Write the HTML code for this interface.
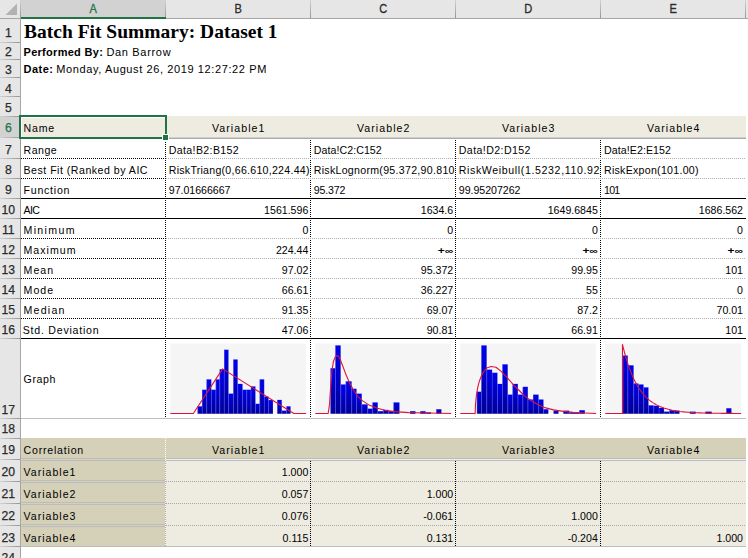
<!DOCTYPE html>
<html><head><meta charset="utf-8"><title>Batch Fit Summary</title>
<style>
html,body{margin:0;padding:0;background:#fff;}
body{width:748px;height:558px;overflow:hidden;font-family:"Liberation Sans",sans-serif;}
svg{display:block;font-family:"Liberation Sans",sans-serif;}
</style></head><body>
<svg width="748" height="558" viewBox="0 0 748 558">
<defs><linearGradient id="gv" x1="0" x2="0" y1="0" y2="1"><stop offset="0" stop-color="#d2d2d2"/><stop offset="1" stop-color="#969696"/></linearGradient><linearGradient id="gh" x1="0" x2="1" y1="0" y2="0"><stop offset="0" stop-color="#d2d2d2"/><stop offset="1" stop-color="#969696"/></linearGradient></defs>
<g shape-rendering="crispEdges">
<rect x="0" y="0" width="748" height="558" fill="#fff" />
<rect x="21" y="116" width="725" height="21" fill="#eeece1" />
<rect x="21" y="438" width="725" height="20" fill="#d5d0b8" />
<rect x="21" y="459" width="145" height="87" fill="#d5d0b8" />
<rect x="166" y="461" width="580" height="85" fill="#eeece1" />
<rect x="0" y="0" width="748" height="18" fill="#e6e6e6" />
<rect x="0" y="19" width="20" height="539" fill="#e6e6e6" />
<rect x="21" y="0" width="144" height="18" fill="#d2d2d2" />
<rect x="0" y="117" width="20" height="20" fill="#d2d2d2" />
<line x1="0" y1="18.5" x2="748" y2="18.5" stroke="#a6a6a6" stroke-width="1"/>
<line x1="20.5" y1="0" x2="20.5" y2="558" stroke="#a6a6a6" stroke-width="1"/>
<rect x="20" y="0" width="1" height="18" fill="url(#gv)" />
<rect x="165" y="0" width="1" height="18" fill="url(#gv)" />
<rect x="310" y="0" width="1" height="18" fill="url(#gv)" />
<rect x="455" y="0" width="1" height="18" fill="url(#gv)" />
<rect x="600" y="0" width="1" height="18" fill="url(#gv)" />
<rect x="745" y="0" width="1" height="18" fill="url(#gv)" />
<rect x="0" y="42" width="20" height="1" fill="url(#gh)" />
<rect x="0" y="59" width="20" height="1" fill="url(#gh)" />
<rect x="0" y="77" width="20" height="1" fill="url(#gh)" />
<rect x="0" y="96" width="20" height="1" fill="url(#gh)" />
<rect x="0" y="116" width="20" height="1" fill="url(#gh)" />
<rect x="0" y="137" width="20" height="1" fill="url(#gh)" />
<rect x="0" y="158" width="20" height="1" fill="url(#gh)" />
<rect x="0" y="178" width="20" height="1" fill="url(#gh)" />
<rect x="0" y="198" width="20" height="1" fill="url(#gh)" />
<rect x="0" y="218" width="20" height="1" fill="url(#gh)" />
<rect x="0" y="238" width="20" height="1" fill="url(#gh)" />
<rect x="0" y="258" width="20" height="1" fill="url(#gh)" />
<rect x="0" y="278" width="20" height="1" fill="url(#gh)" />
<rect x="0" y="298" width="20" height="1" fill="url(#gh)" />
<rect x="0" y="318" width="20" height="1" fill="url(#gh)" />
<rect x="0" y="338" width="20" height="1" fill="url(#gh)" />
<rect x="0" y="418" width="20" height="1" fill="url(#gh)" />
<rect x="0" y="438" width="20" height="1" fill="url(#gh)" />
<rect x="0" y="459" width="20" height="1" fill="url(#gh)" />
<rect x="0" y="481" width="20" height="1" fill="url(#gh)" />
<rect x="0" y="503" width="20" height="1" fill="url(#gh)" />
<rect x="0" y="525" width="20" height="1" fill="url(#gh)" />
<rect x="0" y="546" width="20" height="1" fill="url(#gh)" />
<polygon points="5.5,15 17,3.5 17,15" fill="#b2b2b2" shape-rendering="geometricPrecision"/>
<line x1="21" y1="18.0" x2="166" y2="18.0" stroke="#217346" stroke-width="2"/>
<line x1="20.0" y1="116" x2="20.0" y2="138" stroke="#217346" stroke-width="2"/>
<line x1="20.5" y1="139" x2="20.5" y2="339" stroke="#9a9a9a" stroke-width="1"/>
<line x1="166" y1="137.5" x2="746" y2="137.5" stroke="#d0d0d0" stroke-width="1"/>
<line x1="166" y1="138.5" x2="746" y2="138.5" stroke="#aaaaaa" stroke-width="1"/>
<line x1="165.5" y1="140" x2="165.5" y2="418" stroke="#000" stroke-width="1" stroke-dasharray="1 1"/>
<line x1="310.5" y1="140" x2="310.5" y2="418" stroke="#000" stroke-width="1" stroke-dasharray="1 1"/>
<line x1="455.5" y1="140" x2="455.5" y2="418" stroke="#000" stroke-width="1" stroke-dasharray="1 1"/>
<line x1="600.5" y1="140" x2="600.5" y2="418" stroke="#000" stroke-width="1" stroke-dasharray="1 1"/>
<line x1="21" y1="158.5" x2="165" y2="158.5" stroke="#000" stroke-width="1" stroke-dasharray="1 1"/>
<line x1="166" y1="158.5" x2="746" y2="158.5" stroke="#b0b0b0" stroke-width="1" stroke-dasharray="1 1"/>
<line x1="21" y1="178.5" x2="165" y2="178.5" stroke="#000" stroke-width="1" stroke-dasharray="1 1"/>
<line x1="166" y1="178.5" x2="746" y2="178.5" stroke="#b0b0b0" stroke-width="1" stroke-dasharray="1 1"/>
<line x1="21" y1="198.5" x2="746" y2="198.5" stroke="#000" stroke-width="1"/>
<line x1="21" y1="218.5" x2="746" y2="218.5" stroke="#000" stroke-width="1"/>
<line x1="21" y1="238.5" x2="165" y2="238.5" stroke="#000" stroke-width="1" stroke-dasharray="1 1"/>
<line x1="166" y1="238.5" x2="746" y2="238.5" stroke="#b0b0b0" stroke-width="1" stroke-dasharray="1 1"/>
<line x1="21" y1="258.5" x2="165" y2="258.5" stroke="#000" stroke-width="1" stroke-dasharray="1 1"/>
<line x1="166" y1="258.5" x2="746" y2="258.5" stroke="#b0b0b0" stroke-width="1" stroke-dasharray="1 1"/>
<line x1="21" y1="278.5" x2="165" y2="278.5" stroke="#000" stroke-width="1" stroke-dasharray="1 1"/>
<line x1="166" y1="278.5" x2="746" y2="278.5" stroke="#b0b0b0" stroke-width="1" stroke-dasharray="1 1"/>
<line x1="21" y1="298.5" x2="165" y2="298.5" stroke="#000" stroke-width="1" stroke-dasharray="1 1"/>
<line x1="166" y1="298.5" x2="746" y2="298.5" stroke="#b0b0b0" stroke-width="1" stroke-dasharray="1 1"/>
<line x1="21" y1="318.5" x2="165" y2="318.5" stroke="#000" stroke-width="1" stroke-dasharray="1 1"/>
<line x1="166" y1="318.5" x2="746" y2="318.5" stroke="#b0b0b0" stroke-width="1" stroke-dasharray="1 1"/>
<line x1="21" y1="338.5" x2="746" y2="338.5" stroke="#000" stroke-width="1"/>
<line x1="21" y1="418.5" x2="746" y2="418.5" stroke="#bdbdbd" stroke-width="1"/>
<line x1="21" y1="458.5" x2="746" y2="458.5" stroke="#bcbcbc" stroke-width="1"/>
<line x1="166" y1="459.5" x2="746" y2="459.5" stroke="#f0efe8" stroke-width="1"/>
<line x1="21" y1="460.5" x2="746" y2="460.5" stroke="#bcbcbc" stroke-width="1"/>
<line x1="21" y1="480.5" x2="165" y2="480.5" stroke="#bcbcbc" stroke-width="1"/>
<line x1="21" y1="482.5" x2="165" y2="482.5" stroke="#bcbcbc" stroke-width="1"/>
<line x1="166" y1="481.5" x2="746" y2="481.5" stroke="#a8a8a8" stroke-width="1" stroke-dasharray="1 1"/>
<line x1="21" y1="502.5" x2="165" y2="502.5" stroke="#bcbcbc" stroke-width="1"/>
<line x1="21" y1="504.5" x2="165" y2="504.5" stroke="#bcbcbc" stroke-width="1"/>
<line x1="166" y1="503.5" x2="746" y2="503.5" stroke="#a8a8a8" stroke-width="1" stroke-dasharray="1 1"/>
<line x1="21" y1="524.5" x2="165" y2="524.5" stroke="#bcbcbc" stroke-width="1"/>
<line x1="21" y1="526.5" x2="165" y2="526.5" stroke="#bcbcbc" stroke-width="1"/>
<line x1="166" y1="525.5" x2="746" y2="525.5" stroke="#a8a8a8" stroke-width="1" stroke-dasharray="1 1"/>
<line x1="21" y1="546.5" x2="746" y2="546.5" stroke="#bcbcbc" stroke-width="1"/>
<line x1="165.5" y1="461" x2="165.5" y2="546" stroke="#a8a8a8" stroke-width="1"/>
<line x1="165.5" y1="438" x2="165.5" y2="546" stroke="#ffffff" stroke-width="1" stroke-dasharray="1 1"/>
<line x1="310.5" y1="461" x2="310.5" y2="546" stroke="#000" stroke-width="1" stroke-dasharray="1 1"/>
<line x1="455.5" y1="461" x2="455.5" y2="546" stroke="#000" stroke-width="1" stroke-dasharray="1 1"/>
<line x1="600.5" y1="461" x2="600.5" y2="546" stroke="#000" stroke-width="1" stroke-dasharray="1 1"/>
<rect x="20" y="116" width="146" height="22" fill="none" stroke="#217346" stroke-width="2"/>
<line x1="21" y1="117.5" x2="165" y2="117.5" stroke="#fff" stroke-width="1"/>
<line x1="21.5" y1="117" x2="21.5" y2="137" stroke="#fff" stroke-width="1"/>
<rect x="162" y="134" width="7" height="7" fill="#fff" />
<rect x="163" y="135" width="5" height="5" fill="#217346" />
</g>
<text x="0" y="0" font-size="12.3" fill="#217346" text-anchor="middle" stroke="#217346" stroke-width="0.3" transform="translate(93.2,12.8) scale(0.9,1)">A</text>
<text x="0" y="0" font-size="12.3" fill="#2b2b2b" text-anchor="middle" stroke="#2b2b2b" stroke-width="0.3" transform="translate(238.2,12.8) scale(0.9,1)">B</text>
<text x="0" y="0" font-size="12.3" fill="#2b2b2b" text-anchor="middle" stroke="#2b2b2b" stroke-width="0.3" transform="translate(383.2,12.8) scale(0.9,1)">C</text>
<text x="0" y="0" font-size="12.3" fill="#2b2b2b" text-anchor="middle" stroke="#2b2b2b" stroke-width="0.3" transform="translate(528.2,12.8) scale(0.9,1)">D</text>
<text x="0" y="0" font-size="12.3" fill="#2b2b2b" text-anchor="middle" stroke="#2b2b2b" stroke-width="0.3" transform="translate(673.2,12.8) scale(0.9,1)">E</text>
<text x="8.3" y="37.2" font-size="12.2" fill="#2b2b2b" text-anchor="middle" stroke="#2b2b2b" stroke-width="0.25">1</text>
<text x="8.3" y="55.5" font-size="12.2" fill="#2b2b2b" text-anchor="middle" stroke="#2b2b2b" stroke-width="0.25">2</text>
<text x="8.3" y="73.5" font-size="12.2" fill="#2b2b2b" text-anchor="middle" stroke="#2b2b2b" stroke-width="0.25">3</text>
<text x="8.3" y="92.5" font-size="12.2" fill="#2b2b2b" text-anchor="middle" stroke="#2b2b2b" stroke-width="0.25">4</text>
<text x="8.3" y="112.3" font-size="12.2" fill="#2b2b2b" text-anchor="middle" stroke="#2b2b2b" stroke-width="0.25">5</text>
<text x="8.3" y="132" font-size="12.2" fill="#217346" text-anchor="middle" stroke="#217346" stroke-width="0.25">6</text>
<text x="8.3" y="153.5" font-size="12.2" fill="#2b2b2b" text-anchor="middle" stroke="#2b2b2b" stroke-width="0.25">7</text>
<text x="8.3" y="173.5" font-size="12.2" fill="#2b2b2b" text-anchor="middle" stroke="#2b2b2b" stroke-width="0.25">8</text>
<text x="8.3" y="193.5" font-size="12.2" fill="#2b2b2b" text-anchor="middle" stroke="#2b2b2b" stroke-width="0.25">9</text>
<text x="8.3" y="213.5" font-size="12.2" fill="#2b2b2b" text-anchor="middle" stroke="#2b2b2b" stroke-width="0.25">10</text>
<text x="8.3" y="233.5" font-size="12.2" fill="#2b2b2b" text-anchor="middle" stroke="#2b2b2b" stroke-width="0.25">11</text>
<text x="8.3" y="253.5" font-size="12.2" fill="#2b2b2b" text-anchor="middle" stroke="#2b2b2b" stroke-width="0.25">12</text>
<text x="8.3" y="273.5" font-size="12.2" fill="#2b2b2b" text-anchor="middle" stroke="#2b2b2b" stroke-width="0.25">13</text>
<text x="8.3" y="293.5" font-size="12.2" fill="#2b2b2b" text-anchor="middle" stroke="#2b2b2b" stroke-width="0.25">14</text>
<text x="8.3" y="313.5" font-size="12.2" fill="#2b2b2b" text-anchor="middle" stroke="#2b2b2b" stroke-width="0.25">15</text>
<text x="8.3" y="333.5" font-size="12.2" fill="#2b2b2b" text-anchor="middle" stroke="#2b2b2b" stroke-width="0.25">16</text>
<text x="8.3" y="413.5" font-size="12.2" fill="#2b2b2b" text-anchor="middle" stroke="#2b2b2b" stroke-width="0.25">17</text>
<text x="8.3" y="433" font-size="12.2" fill="#2b2b2b" text-anchor="middle" stroke="#2b2b2b" stroke-width="0.25">18</text>
<text x="8.3" y="454" font-size="12.2" fill="#2b2b2b" text-anchor="middle" stroke="#2b2b2b" stroke-width="0.25">19</text>
<text x="8.3" y="476" font-size="12.2" fill="#2b2b2b" text-anchor="middle" stroke="#2b2b2b" stroke-width="0.25">20</text>
<text x="8.3" y="498" font-size="12.2" fill="#2b2b2b" text-anchor="middle" stroke="#2b2b2b" stroke-width="0.25">21</text>
<text x="8.3" y="520" font-size="12.2" fill="#2b2b2b" text-anchor="middle" stroke="#2b2b2b" stroke-width="0.25">22</text>
<text x="8.3" y="542" font-size="12.2" fill="#2b2b2b" text-anchor="middle" stroke="#2b2b2b" stroke-width="0.25">23</text>
<text x="8.3" y="562" font-size="12.2" fill="#2b2b2b" text-anchor="middle" stroke="#2b2b2b" stroke-width="0.25">24</text>
<text x="24" y="37.6" font-size="19.5" font-family="Liberation Serif, serif" font-weight="bold" fill="#000" textLength="253.5" lengthAdjust="spacing" >Batch Fit Summary: Dataset 1</text>
<text x="23.5" y="56" font-size="11" font-weight="bold" fill="#000" textLength="79.3" lengthAdjust="spacing" >Performed By:</text>
<text x="106.4" y="56" font-size="11" fill="#000" textLength="64.2" lengthAdjust="spacing" >Dan Barrow</text>
<text x="23.5" y="73" font-size="11" font-weight="bold" fill="#000" textLength="29.5" lengthAdjust="spacing" >Date:</text>
<text x="56.3" y="73" font-size="11" fill="#000" textLength="210" lengthAdjust="spacing" >Monday, August 26, 2019 12:27:22 PM</text>
<text x="23.5" y="132" font-size="10.6" fill="#000" textLength="30.75" lengthAdjust="spacing" >Name</text>
<text x="23.5" y="154" font-size="10.6" fill="#000" textLength="33.25" lengthAdjust="spacing" >Range</text>
<text x="23.5" y="174" font-size="10.6" fill="#000" textLength="124" lengthAdjust="spacing" >Best Fit (Ranked by AIC</text>
<text x="23.5" y="194" font-size="10.6" fill="#000" textLength="46" lengthAdjust="spacing" >Function</text>
<text x="23.5" y="214" font-size="10.6" fill="#000" textLength="16.5" lengthAdjust="spacing" >AIC</text>
<text x="23.5" y="234" font-size="10.6" fill="#000" textLength="51" lengthAdjust="spacing" >Minimum</text>
<text x="23.5" y="254" font-size="10.6" fill="#000" textLength="52" lengthAdjust="spacing" >Maximum</text>
<text x="23.5" y="274" font-size="10.6" fill="#000" textLength="29.75" lengthAdjust="spacing" >Mean</text>
<text x="23.5" y="294" font-size="10.6" fill="#000" textLength="29.75" lengthAdjust="spacing" >Mode</text>
<text x="23.5" y="314" font-size="10.6" fill="#000" textLength="41" lengthAdjust="spacing" >Median</text>
<text x="22.8" y="334" font-size="10.6" fill="#000" textLength="75.75" lengthAdjust="spacing" >Std. Deviation</text>
<text x="23.5" y="382.5" font-size="10.6" fill="#000" textLength="32" lengthAdjust="spacing" >Graph</text>
<text x="238.2" y="132" font-size="10.6" fill="#000" text-anchor="middle" textLength="52.5" lengthAdjust="spacing" >Variable1</text>
<text x="238.2" y="454" font-size="10.6" fill="#000" text-anchor="middle" textLength="52.5" lengthAdjust="spacing" >Variable1</text>
<text x="383.2" y="132" font-size="10.6" fill="#000" text-anchor="middle" textLength="52.5" lengthAdjust="spacing" >Variable2</text>
<text x="383.2" y="454" font-size="10.6" fill="#000" text-anchor="middle" textLength="52.5" lengthAdjust="spacing" >Variable2</text>
<text x="528.2" y="132" font-size="10.6" fill="#000" text-anchor="middle" textLength="52.5" lengthAdjust="spacing" >Variable3</text>
<text x="528.2" y="454" font-size="10.6" fill="#000" text-anchor="middle" textLength="52.5" lengthAdjust="spacing" >Variable3</text>
<text x="673.2" y="132" font-size="10.6" fill="#000" text-anchor="middle" textLength="52.5" lengthAdjust="spacing" >Variable4</text>
<text x="673.2" y="454" font-size="10.6" fill="#000" text-anchor="middle" textLength="52.5" lengthAdjust="spacing" >Variable4</text>
<text x="168.75" y="154" font-size="10.6" fill="#000" textLength="70" lengthAdjust="spacing" >Data!B2:B152</text>
<text x="168.75" y="174" font-size="10.6" fill="#000" textLength="140.75" lengthAdjust="spacing" >RiskTriang(0,66.610,224.44)</text>
<text x="168.75" y="194" font-size="10.6" fill="#000" textLength="61.75" lengthAdjust="spacing" >97.01666667</text>
<text x="313.75" y="154" font-size="10.6" fill="#000" textLength="68" lengthAdjust="spacing" >Data!C2:C152</text>
<text x="313.75" y="174" font-size="10.6" fill="#000" textLength="140.75" lengthAdjust="spacing" >RiskLognorm(95.372,90.810</text>
<text x="313.75" y="194" font-size="10.6" fill="#000" textLength="31.75" lengthAdjust="spacing" >95.372</text>
<text x="458.75" y="154" font-size="10.6" fill="#000" textLength="71.75" lengthAdjust="spacing" >Data!D2:D152</text>
<text x="458.75" y="174" font-size="10.6" fill="#000" textLength="140.75" lengthAdjust="spacing" >RiskWeibull(1.5232,110.92</text>
<text x="458.75" y="194" font-size="10.6" fill="#000" textLength="61.75" lengthAdjust="spacing" >99.95207262</text>
<text x="604" y="154" font-size="10.6" fill="#000" textLength="67" lengthAdjust="spacing" >Data!E2:E152</text>
<text x="604" y="174" font-size="10.6" fill="#000" textLength="94.5" lengthAdjust="spacing" >RiskExpon(101.00)</text>
<text x="604" y="194" font-size="10.6" fill="#000" textLength="16.25" lengthAdjust="spacing" >101</text>
<text x="308.3" y="214" font-size="10.6" fill="#000" text-anchor="end" >1561.596</text>
<text x="453.2" y="214" font-size="10.6" fill="#000" text-anchor="end" >1634.6</text>
<text x="597.8" y="214" font-size="10.6" fill="#000" text-anchor="end" >1649.6845</text>
<text x="743" y="214" font-size="10.6" fill="#000" text-anchor="end" >1686.562</text>
<text x="308.3" y="234" font-size="10.6" fill="#000" text-anchor="end" >0</text>
<text x="453.2" y="234" font-size="10.6" fill="#000" text-anchor="end" >0</text>
<text x="597.8" y="234" font-size="10.6" fill="#000" text-anchor="end" >0</text>
<text x="743" y="234" font-size="10.6" fill="#000" text-anchor="end" >0</text>
<text x="308.3" y="254" font-size="10.6" fill="#000" text-anchor="end" >224.44</text>
<text x="453.2" y="253.5" font-size="8.6" font-weight="bold" fill="#000" text-anchor="end" textLength="15.4" lengthAdjust="spacingAndGlyphs" >+∞</text>
<text x="597.8" y="253.5" font-size="8.6" font-weight="bold" fill="#000" text-anchor="end" textLength="15.4" lengthAdjust="spacingAndGlyphs" >+∞</text>
<text x="743" y="253.5" font-size="8.6" font-weight="bold" fill="#000" text-anchor="end" textLength="15.4" lengthAdjust="spacingAndGlyphs" >+∞</text>
<text x="308.3" y="274" font-size="10.6" fill="#000" text-anchor="end" >97.02</text>
<text x="453.2" y="274" font-size="10.6" fill="#000" text-anchor="end" >95.372</text>
<text x="597.8" y="274" font-size="10.6" fill="#000" text-anchor="end" >99.95</text>
<text x="743" y="274" font-size="10.6" fill="#000" text-anchor="end" >101</text>
<text x="308.3" y="294" font-size="10.6" fill="#000" text-anchor="end" >66.61</text>
<text x="453.2" y="294" font-size="10.6" fill="#000" text-anchor="end" >36.227</text>
<text x="597.8" y="294" font-size="10.6" fill="#000" text-anchor="end" >55</text>
<text x="743" y="294" font-size="10.6" fill="#000" text-anchor="end" >0</text>
<text x="308.3" y="314" font-size="10.6" fill="#000" text-anchor="end" >91.35</text>
<text x="453.2" y="314" font-size="10.6" fill="#000" text-anchor="end" >69.07</text>
<text x="597.8" y="314" font-size="10.6" fill="#000" text-anchor="end" >87.2</text>
<text x="743" y="314" font-size="10.6" fill="#000" text-anchor="end" >70.01</text>
<text x="308.3" y="334" font-size="10.6" fill="#000" text-anchor="end" >47.06</text>
<text x="453.2" y="334" font-size="10.6" fill="#000" text-anchor="end" >90.81</text>
<text x="597.8" y="334" font-size="10.6" fill="#000" text-anchor="end" >66.91</text>
<text x="743" y="334" font-size="10.6" fill="#000" text-anchor="end" >101</text>
<text x="23.5" y="454" font-size="10.6" fill="#000" textLength="59.75" lengthAdjust="spacing" >Correlation</text>
<text x="23.5" y="476" font-size="10.6" fill="#000" textLength="52" lengthAdjust="spacing" >Variable1</text>
<text x="23.5" y="498" font-size="10.6" fill="#000" textLength="52" lengthAdjust="spacing" >Variable2</text>
<text x="23.5" y="520" font-size="10.6" fill="#000" textLength="52" lengthAdjust="spacing" >Variable3</text>
<text x="23.5" y="542" font-size="10.6" fill="#000" textLength="52" lengthAdjust="spacing" >Variable4</text>
<text x="308.3" y="476" font-size="10.6" fill="#000" text-anchor="end" >1.000</text>
<text x="308.3" y="498" font-size="10.6" fill="#000" text-anchor="end" >0.057</text>
<text x="453.2" y="498" font-size="10.6" fill="#000" text-anchor="end" >1.000</text>
<text x="308.3" y="520" font-size="10.6" fill="#000" text-anchor="end" >0.076</text>
<text x="453.2" y="520" font-size="10.6" fill="#000" text-anchor="end" >-0.061</text>
<text x="597.8" y="520" font-size="10.6" fill="#000" text-anchor="end" >1.000</text>
<text x="308.3" y="542" font-size="10.6" fill="#000" text-anchor="end" >0.115</text>
<text x="453.2" y="542" font-size="10.6" fill="#000" text-anchor="end" >0.131</text>
<text x="597.8" y="542" font-size="10.6" fill="#000" text-anchor="end" >-0.204</text>
<text x="743" y="542" font-size="10.6" fill="#000" text-anchor="end" >1.000</text>
<svg x="166" y="338" width="146" height="82" viewBox="0 0 748 420" preserveAspectRatio="none" overflow="hidden">
<defs><linearGradient id="vg" x1="0" x2="0" y1="0" y2="1"><stop offset="0" stop-color="#0000ea"/><stop offset="1" stop-color="#000098"/></linearGradient></defs>
<rect x="22" y="28" width="696" height="356.5" fill="#f5f5f5"/>
<rect x="162" y="350" width="23" height="38" fill="url(#vg)"/>
<rect x="162" y="350" width="3" height="38" fill="#6a6aff" opacity="0.55"/>
<rect x="183" y="350" width="2" height="38" fill="#6a6aff" opacity="0.35"/>
<rect x="185" y="265" width="23" height="123" fill="url(#vg)"/>
<rect x="185" y="265" width="3" height="123" fill="#6a6aff" opacity="0.55"/>
<rect x="206" y="265" width="2" height="123" fill="#6a6aff" opacity="0.35"/>
<rect x="208" y="212" width="24" height="176" fill="url(#vg)"/>
<rect x="208" y="212" width="3" height="176" fill="#6a6aff" opacity="0.55"/>
<rect x="230" y="212" width="2" height="176" fill="#6a6aff" opacity="0.35"/>
<rect x="232" y="265" width="23" height="123" fill="url(#vg)"/>
<rect x="232" y="265" width="3" height="123" fill="#6a6aff" opacity="0.55"/>
<rect x="253" y="265" width="2" height="123" fill="#6a6aff" opacity="0.35"/>
<rect x="255" y="212" width="20" height="176" fill="url(#vg)"/>
<rect x="255" y="212" width="3" height="176" fill="#6a6aff" opacity="0.55"/>
<rect x="273" y="212" width="2" height="176" fill="#6a6aff" opacity="0.35"/>
<rect x="275" y="160" width="23" height="228" fill="url(#vg)"/>
<rect x="275" y="160" width="3" height="228" fill="#6a6aff" opacity="0.55"/>
<rect x="296" y="160" width="2" height="228" fill="#6a6aff" opacity="0.35"/>
<rect x="298" y="60" width="22" height="328" fill="url(#vg)"/>
<rect x="298" y="60" width="3" height="328" fill="#6a6aff" opacity="0.55"/>
<rect x="318" y="60" width="2" height="328" fill="#6a6aff" opacity="0.35"/>
<rect x="320" y="285" width="25" height="103" fill="url(#vg)"/>
<rect x="320" y="285" width="3" height="103" fill="#6a6aff" opacity="0.55"/>
<rect x="343" y="285" width="2" height="103" fill="#6a6aff" opacity="0.35"/>
<rect x="345" y="110" width="22" height="278" fill="url(#vg)"/>
<rect x="345" y="110" width="3" height="278" fill="#6a6aff" opacity="0.55"/>
<rect x="365" y="110" width="2" height="278" fill="#6a6aff" opacity="0.35"/>
<rect x="367" y="235" width="25" height="153" fill="url(#vg)"/>
<rect x="367" y="235" width="3" height="153" fill="#6a6aff" opacity="0.55"/>
<rect x="390" y="235" width="2" height="153" fill="#6a6aff" opacity="0.35"/>
<rect x="392" y="265" width="21" height="123" fill="url(#vg)"/>
<rect x="392" y="265" width="3" height="123" fill="#6a6aff" opacity="0.55"/>
<rect x="411" y="265" width="2" height="123" fill="#6a6aff" opacity="0.35"/>
<rect x="413" y="265" width="22" height="123" fill="url(#vg)"/>
<rect x="413" y="265" width="3" height="123" fill="#6a6aff" opacity="0.55"/>
<rect x="433" y="265" width="2" height="123" fill="#6a6aff" opacity="0.35"/>
<rect x="435" y="248" width="23" height="140" fill="url(#vg)"/>
<rect x="435" y="248" width="3" height="140" fill="#6a6aff" opacity="0.55"/>
<rect x="456" y="248" width="2" height="140" fill="#6a6aff" opacity="0.35"/>
<rect x="458" y="337" width="22" height="51" fill="url(#vg)"/>
<rect x="458" y="337" width="3" height="51" fill="#6a6aff" opacity="0.55"/>
<rect x="478" y="337" width="2" height="51" fill="#6a6aff" opacity="0.35"/>
<rect x="480" y="212" width="23" height="176" fill="url(#vg)"/>
<rect x="480" y="212" width="3" height="176" fill="#6a6aff" opacity="0.55"/>
<rect x="501" y="212" width="2" height="176" fill="#6a6aff" opacity="0.35"/>
<rect x="503" y="300" width="22" height="88" fill="url(#vg)"/>
<rect x="503" y="300" width="3" height="88" fill="#6a6aff" opacity="0.55"/>
<rect x="523" y="300" width="2" height="88" fill="#6a6aff" opacity="0.35"/>
<rect x="525" y="318" width="23" height="70" fill="url(#vg)"/>
<rect x="525" y="318" width="3" height="70" fill="#6a6aff" opacity="0.55"/>
<rect x="546" y="318" width="2" height="70" fill="#6a6aff" opacity="0.35"/>
<rect x="570" y="317" width="23" height="71" fill="url(#vg)"/>
<rect x="570" y="317" width="3" height="71" fill="#6a6aff" opacity="0.55"/>
<rect x="591" y="317" width="2" height="71" fill="#6a6aff" opacity="0.35"/>
<rect x="593" y="372" width="24" height="16" fill="url(#vg)"/>
<rect x="593" y="372" width="3" height="16" fill="#6a6aff" opacity="0.55"/>
<rect x="615" y="372" width="2" height="16" fill="#6a6aff" opacity="0.35"/>
<rect x="617" y="350" width="21" height="38" fill="url(#vg)"/>
<rect x="617" y="350" width="3" height="38" fill="#6a6aff" opacity="0.55"/>
<rect x="636" y="350" width="2" height="38" fill="#6a6aff" opacity="0.35"/>
<polyline points="22,386.8 140,386.8 290,158 655,386.8 718,386.8" fill="none" stroke="#dc143c" stroke-width="5" stroke-linejoin="round" vector-effect="non-scaling-stroke" style="stroke-width:1.1px"/>
</svg>
<svg x="311" y="338" width="146" height="82" viewBox="0 0 748 420" preserveAspectRatio="none" overflow="hidden">
<rect x="22" y="28" width="696" height="356.5" fill="#f5f5f5"/>
<rect x="100" y="155" width="25" height="233" fill="url(#vg)"/>
<rect x="100" y="155" width="3" height="233" fill="#6a6aff" opacity="0.55"/>
<rect x="123" y="155" width="2" height="233" fill="#6a6aff" opacity="0.35"/>
<rect x="125" y="38" width="27" height="350" fill="url(#vg)"/>
<rect x="125" y="38" width="3" height="350" fill="#6a6aff" opacity="0.55"/>
<rect x="150" y="38" width="2" height="350" fill="#6a6aff" opacity="0.35"/>
<rect x="152" y="238" width="26" height="150" fill="url(#vg)"/>
<rect x="152" y="238" width="3" height="150" fill="#6a6aff" opacity="0.55"/>
<rect x="176" y="238" width="2" height="150" fill="#6a6aff" opacity="0.35"/>
<rect x="178" y="222" width="30" height="166" fill="url(#vg)"/>
<rect x="178" y="222" width="3" height="166" fill="#6a6aff" opacity="0.55"/>
<rect x="206" y="222" width="2" height="166" fill="#6a6aff" opacity="0.35"/>
<rect x="208" y="260" width="25" height="128" fill="url(#vg)"/>
<rect x="208" y="260" width="3" height="128" fill="#6a6aff" opacity="0.55"/>
<rect x="231" y="260" width="2" height="128" fill="#6a6aff" opacity="0.35"/>
<rect x="233" y="285" width="27" height="103" fill="url(#vg)"/>
<rect x="233" y="285" width="3" height="103" fill="#6a6aff" opacity="0.55"/>
<rect x="258" y="285" width="2" height="103" fill="#6a6aff" opacity="0.35"/>
<rect x="260" y="340" width="30" height="48" fill="url(#vg)"/>
<rect x="260" y="340" width="3" height="48" fill="#6a6aff" opacity="0.55"/>
<rect x="288" y="340" width="2" height="48" fill="#6a6aff" opacity="0.35"/>
<rect x="290" y="362" width="25" height="26" fill="url(#vg)"/>
<rect x="290" y="362" width="3" height="26" fill="#6a6aff" opacity="0.55"/>
<rect x="313" y="362" width="2" height="26" fill="#6a6aff" opacity="0.35"/>
<rect x="315" y="330" width="27" height="58" fill="url(#vg)"/>
<rect x="315" y="330" width="3" height="58" fill="#6a6aff" opacity="0.55"/>
<rect x="340" y="330" width="2" height="58" fill="#6a6aff" opacity="0.35"/>
<rect x="342" y="375" width="28" height="13" fill="url(#vg)"/>
<rect x="342" y="375" width="3" height="13" fill="#6a6aff" opacity="0.55"/>
<rect x="368" y="375" width="2" height="13" fill="#6a6aff" opacity="0.35"/>
<rect x="370" y="368" width="27" height="20" fill="url(#vg)"/>
<rect x="370" y="368" width="3" height="20" fill="#6a6aff" opacity="0.55"/>
<rect x="395" y="368" width="2" height="20" fill="#6a6aff" opacity="0.35"/>
<rect x="397" y="375" width="26" height="13" fill="url(#vg)"/>
<rect x="397" y="375" width="3" height="13" fill="#6a6aff" opacity="0.55"/>
<rect x="421" y="375" width="2" height="13" fill="#6a6aff" opacity="0.35"/>
<rect x="423" y="330" width="30" height="58" fill="url(#vg)"/>
<rect x="423" y="330" width="3" height="58" fill="#6a6aff" opacity="0.55"/>
<rect x="451" y="330" width="2" height="58" fill="#6a6aff" opacity="0.35"/>
<rect x="507" y="375" width="28" height="13" fill="url(#vg)"/>
<rect x="507" y="375" width="3" height="13" fill="#6a6aff" opacity="0.55"/>
<rect x="533" y="375" width="2" height="13" fill="#6a6aff" opacity="0.35"/>
<rect x="560" y="375" width="27" height="13" fill="url(#vg)"/>
<rect x="560" y="375" width="3" height="13" fill="#6a6aff" opacity="0.55"/>
<rect x="585" y="375" width="2" height="13" fill="#6a6aff" opacity="0.35"/>
<rect x="587" y="381" width="28" height="7" fill="url(#vg)"/>
<rect x="587" y="381" width="3" height="7" fill="#6a6aff" opacity="0.55"/>
<rect x="613" y="381" width="2" height="7" fill="#6a6aff" opacity="0.35"/>
<rect x="642" y="365" width="26" height="23" fill="url(#vg)"/>
<rect x="642" y="365" width="3" height="23" fill="#6a6aff" opacity="0.55"/>
<rect x="666" y="365" width="2" height="23" fill="#6a6aff" opacity="0.35"/>
<polyline points="22,386.8 88,386.8 95,340 100,260 107,170 115,120 125,95 133,90 142,96 150,110 165,150 180,190 200,235 220,270 240,300 265,322 300,345 340,360 380,370 430,377 500,382 600,384 718,386.8" fill="none" stroke="#dc143c" stroke-width="5" stroke-linejoin="round" vector-effect="non-scaling-stroke" style="stroke-width:1.1px"/>
</svg>
<svg x="456" y="338" width="146" height="82" viewBox="0 0 748 420" preserveAspectRatio="none" overflow="hidden">
<rect x="22" y="28" width="696" height="356.5" fill="#f5f5f5"/>
<rect x="107" y="275" width="23" height="113" fill="url(#vg)"/>
<rect x="107" y="275" width="3" height="113" fill="#6a6aff" opacity="0.55"/>
<rect x="128" y="275" width="2" height="113" fill="#6a6aff" opacity="0.35"/>
<rect x="130" y="38" width="27" height="350" fill="url(#vg)"/>
<rect x="130" y="38" width="3" height="350" fill="#6a6aff" opacity="0.55"/>
<rect x="155" y="38" width="2" height="350" fill="#6a6aff" opacity="0.35"/>
<rect x="157" y="162" width="28" height="226" fill="url(#vg)"/>
<rect x="157" y="162" width="3" height="226" fill="#6a6aff" opacity="0.55"/>
<rect x="183" y="162" width="2" height="226" fill="#6a6aff" opacity="0.35"/>
<rect x="185" y="178" width="27" height="210" fill="url(#vg)"/>
<rect x="185" y="178" width="3" height="210" fill="#6a6aff" opacity="0.55"/>
<rect x="210" y="178" width="2" height="210" fill="#6a6aff" opacity="0.35"/>
<rect x="212" y="235" width="26" height="153" fill="url(#vg)"/>
<rect x="212" y="235" width="3" height="153" fill="#6a6aff" opacity="0.55"/>
<rect x="236" y="235" width="2" height="153" fill="#6a6aff" opacity="0.35"/>
<rect x="238" y="135" width="27" height="253" fill="url(#vg)"/>
<rect x="238" y="135" width="3" height="253" fill="#6a6aff" opacity="0.55"/>
<rect x="263" y="135" width="2" height="253" fill="#6a6aff" opacity="0.35"/>
<rect x="265" y="290" width="25" height="98" fill="url(#vg)"/>
<rect x="265" y="290" width="3" height="98" fill="#6a6aff" opacity="0.55"/>
<rect x="288" y="290" width="2" height="98" fill="#6a6aff" opacity="0.35"/>
<rect x="290" y="235" width="27" height="153" fill="url(#vg)"/>
<rect x="290" y="235" width="3" height="153" fill="#6a6aff" opacity="0.55"/>
<rect x="315" y="235" width="2" height="153" fill="#6a6aff" opacity="0.35"/>
<rect x="317" y="290" width="25" height="98" fill="url(#vg)"/>
<rect x="317" y="290" width="3" height="98" fill="#6a6aff" opacity="0.55"/>
<rect x="340" y="290" width="2" height="98" fill="#6a6aff" opacity="0.35"/>
<rect x="342" y="250" width="26" height="138" fill="url(#vg)"/>
<rect x="342" y="250" width="3" height="138" fill="#6a6aff" opacity="0.55"/>
<rect x="366" y="250" width="2" height="138" fill="#6a6aff" opacity="0.35"/>
<rect x="368" y="315" width="27" height="73" fill="url(#vg)"/>
<rect x="368" y="315" width="3" height="73" fill="#6a6aff" opacity="0.55"/>
<rect x="393" y="315" width="2" height="73" fill="#6a6aff" opacity="0.35"/>
<rect x="395" y="290" width="28" height="98" fill="url(#vg)"/>
<rect x="395" y="290" width="3" height="98" fill="#6a6aff" opacity="0.55"/>
<rect x="421" y="290" width="2" height="98" fill="#6a6aff" opacity="0.35"/>
<rect x="423" y="315" width="25" height="73" fill="url(#vg)"/>
<rect x="423" y="315" width="3" height="73" fill="#6a6aff" opacity="0.55"/>
<rect x="446" y="315" width="2" height="73" fill="#6a6aff" opacity="0.35"/>
<rect x="448" y="365" width="25" height="23" fill="url(#vg)"/>
<rect x="448" y="365" width="3" height="23" fill="#6a6aff" opacity="0.55"/>
<rect x="471" y="365" width="2" height="23" fill="#6a6aff" opacity="0.35"/>
<rect x="500" y="372" width="25" height="16" fill="url(#vg)"/>
<rect x="500" y="372" width="3" height="16" fill="#6a6aff" opacity="0.55"/>
<rect x="523" y="372" width="2" height="16" fill="#6a6aff" opacity="0.35"/>
<rect x="550" y="372" width="30" height="16" fill="url(#vg)"/>
<rect x="550" y="372" width="3" height="16" fill="#6a6aff" opacity="0.55"/>
<rect x="578" y="372" width="2" height="16" fill="#6a6aff" opacity="0.35"/>
<rect x="580" y="381" width="52" height="7" fill="url(#vg)"/>
<rect x="580" y="381" width="3" height="7" fill="#6a6aff" opacity="0.55"/>
<rect x="630" y="381" width="2" height="7" fill="#6a6aff" opacity="0.35"/>
<rect x="632" y="370" width="28" height="18" fill="url(#vg)"/>
<rect x="632" y="370" width="3" height="18" fill="#6a6aff" opacity="0.55"/>
<rect x="658" y="370" width="2" height="18" fill="#6a6aff" opacity="0.35"/>
<polyline points="22,386.8 98,386.8 100,340 105,290 112,250 120,220 130,195 140,175 160,152 180,146 205,150 230,170 260,200 290,235 320,265 350,295 380,318 420,342 460,358 500,368 550,376 600,381 660,384 718,386.8" fill="none" stroke="#dc143c" stroke-width="5" stroke-linejoin="round" vector-effect="non-scaling-stroke" style="stroke-width:1.1px"/>
</svg>
<svg x="601" y="338" width="146" height="82" viewBox="0 0 748 420" preserveAspectRatio="none" overflow="hidden">
<rect x="22" y="28" width="696" height="356.5" fill="#f5f5f5"/>
<rect x="112" y="90" width="25" height="298" fill="url(#vg)"/>
<rect x="112" y="90" width="3" height="298" fill="#6a6aff" opacity="0.55"/>
<rect x="135" y="90" width="2" height="298" fill="#6a6aff" opacity="0.35"/>
<rect x="137" y="140" width="30" height="248" fill="url(#vg)"/>
<rect x="137" y="140" width="3" height="248" fill="#6a6aff" opacity="0.55"/>
<rect x="165" y="140" width="2" height="248" fill="#6a6aff" opacity="0.35"/>
<rect x="167" y="233" width="25" height="155" fill="url(#vg)"/>
<rect x="167" y="233" width="3" height="155" fill="#6a6aff" opacity="0.55"/>
<rect x="190" y="233" width="2" height="155" fill="#6a6aff" opacity="0.35"/>
<rect x="192" y="238" width="26" height="150" fill="url(#vg)"/>
<rect x="192" y="238" width="3" height="150" fill="#6a6aff" opacity="0.55"/>
<rect x="216" y="238" width="2" height="150" fill="#6a6aff" opacity="0.35"/>
<rect x="218" y="253" width="25" height="135" fill="url(#vg)"/>
<rect x="218" y="253" width="3" height="135" fill="#6a6aff" opacity="0.55"/>
<rect x="241" y="253" width="2" height="135" fill="#6a6aff" opacity="0.35"/>
<rect x="243" y="345" width="27" height="43" fill="url(#vg)"/>
<rect x="243" y="345" width="3" height="43" fill="#6a6aff" opacity="0.55"/>
<rect x="268" y="345" width="2" height="43" fill="#6a6aff" opacity="0.35"/>
<rect x="270" y="347" width="27" height="41" fill="url(#vg)"/>
<rect x="270" y="347" width="3" height="41" fill="#6a6aff" opacity="0.55"/>
<rect x="295" y="347" width="2" height="41" fill="#6a6aff" opacity="0.35"/>
<rect x="297" y="358" width="26" height="30" fill="url(#vg)"/>
<rect x="297" y="358" width="3" height="30" fill="#6a6aff" opacity="0.55"/>
<rect x="321" y="358" width="2" height="30" fill="#6a6aff" opacity="0.35"/>
<rect x="323" y="377" width="27" height="11" fill="url(#vg)"/>
<rect x="323" y="377" width="3" height="11" fill="#6a6aff" opacity="0.55"/>
<rect x="348" y="377" width="2" height="11" fill="#6a6aff" opacity="0.35"/>
<rect x="350" y="370" width="25" height="18" fill="url(#vg)"/>
<rect x="350" y="370" width="3" height="18" fill="#6a6aff" opacity="0.55"/>
<rect x="373" y="370" width="2" height="18" fill="#6a6aff" opacity="0.35"/>
<rect x="375" y="372" width="27" height="16" fill="url(#vg)"/>
<rect x="375" y="372" width="3" height="16" fill="#6a6aff" opacity="0.55"/>
<rect x="400" y="372" width="2" height="16" fill="#6a6aff" opacity="0.35"/>
<rect x="455" y="377" width="30" height="11" fill="url(#vg)"/>
<rect x="455" y="377" width="3" height="11" fill="#6a6aff" opacity="0.55"/>
<rect x="483" y="377" width="2" height="11" fill="#6a6aff" opacity="0.35"/>
<rect x="535" y="377" width="32" height="11" fill="url(#vg)"/>
<rect x="535" y="377" width="3" height="11" fill="#6a6aff" opacity="0.55"/>
<rect x="565" y="377" width="2" height="11" fill="#6a6aff" opacity="0.35"/>
<rect x="642" y="360" width="26" height="28" fill="url(#vg)"/>
<rect x="642" y="360" width="3" height="28" fill="#6a6aff" opacity="0.55"/>
<rect x="666" y="360" width="2" height="28" fill="#6a6aff" opacity="0.35"/>
<polyline points="22,386.8 110,386.8 110,33 113,45.4 119,68.9 125,90.9 131,111.3 137,130.3 143,147.9 149,164.4 155,179.7 161,194.0 167,207.3 173,219.7 179,231.2 185,241.9 191,251.9 197,261.2 203,269.9 209,277.9 215,285.4 221,292.4 227,298.9 233,305.0 239,310.6 245,315.9 251,320.8 257,325.3 263,329.6 269,333.5 275,337.2 281,340.6 287,343.8 293,346.7 299,349.5 305,352.1 325,359.4 345,365.2 365,369.8 385,373.4 405,376.2 425,378.5 445,380.2 465,381.6 485,382.7 505,383.6 525,384.3 545,384.8 565,385.2 585,385.6 605,385.8 625,386.0 645,386.2 665,386.3 685,386.4 705,386.5 718,386.5" fill="none" stroke="#dc143c" stroke-width="5" stroke-linejoin="round" vector-effect="non-scaling-stroke" style="stroke-width:1.1px"/>
</svg>
</svg></body></html>
